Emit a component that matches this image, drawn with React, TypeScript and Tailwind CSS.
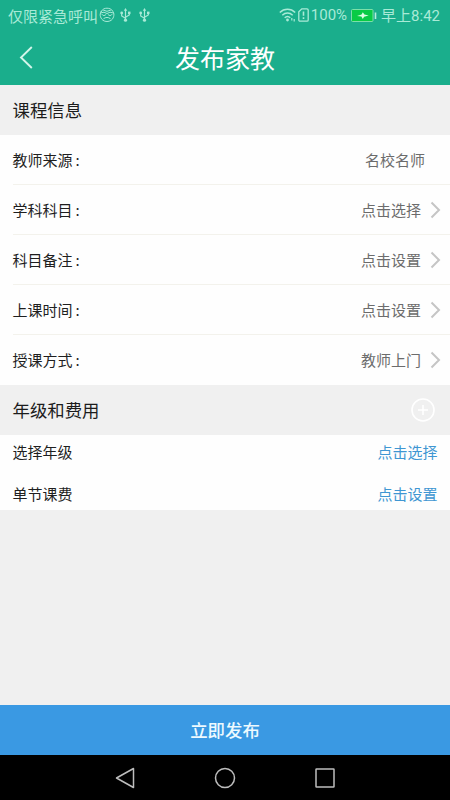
import { ReactNode } from "react"

interface rowProps {
    label: string;
    value: string;
    arrow?: boolean;
    last?: boolean;
}

const rows: rowProps[] = [
    { label: "教师来源", value: "名校名师" },
    { label: "学科科目", value: "点击选择", arrow: true },
    { label: "科目备注", value: "点击设置", arrow: true },
    { label: "上课时间", value: "点击设置", arrow: true },
    { label: "授课方式", value: "教师上门", arrow: true, last: true },
]

const fees = [
    { label: "选择年级", value: "点击选择" },
    { label: "单节课费", value: "点击设置" },
]

const UsbIcon = () => (
    <svg width="11" height="14" viewBox="0 0 11 14" fill="none" stroke="currentColor" strokeWidth="1.2">
        <path d="M5.5 2v10M5.5 10.3L1.7 8V5.2M5.5 9.3L9.3 7V4.7" />
        <path d="M5.5 0L7.2 2.8H3.8z" fill="currentColor" stroke="none" />
        <circle cx="5.5" cy="12.2" r="1.6" fill="currentColor" stroke="none" />
        <circle cx="1.7" cy="4.9" r="1.4" fill="currentColor" stroke="none" />
        <path d="M8 3.6h2.5v2.5H8z" fill="currentColor" stroke="none" />
    </svg>
)

const FaceIcon = () => (
    <svg width="16" height="16" viewBox="0 0 16 16" fill="none" stroke="currentColor" strokeWidth="1" strokeLinecap="round">
        <path d="M2.2 4.5C3.5 2 5.7 1.2 8 1.2s4.8.9 5.9 3.3c1.200 1.800 1.200 3.200.7 5.300C13.700 13 11 14.500 8 14.500S2.500 13 1.500 9.800C.8 7.700 1.200 6.200 2.200 4.500z" />
        <path d="M1.500 6l3.500-.8L8 6.500l3-1.300 3.500.8M3 7.500c.8 1.500 3 1.500 4 0M9 7.500c1 1.500 3.200 1.500 4 0M4.800 11.500c1.900-1.500 4.500-1.500 6.400 0M4.500 3.200L8 4.300l3.500-1.100" />
    </svg>
)

const WifiIcon = () => (
    <svg width="17" height="14" viewBox="0 0 17 14" fill="none" stroke="currentColor" strokeWidth="1.500">
        <path d="M.8 4.500C5.200.2 11.800.2 16.200 4.500M3.300 7.200c3-2.900 7.400-2.900 10.400 0M5.700 9.800c1.700-1.600 3.900-1.600 5.600 0" />
        <circle cx="8.500" cy="12" r="1.400" fill="currentColor" stroke="none" />
        <path d="M12.800 10v2.500M15.200 11v2.500" strokeWidth="1.200" />
    </svg>
)

const SimIcon = () => (
    <svg width="11" height="14" viewBox="0 0 11 14" fill="none" stroke="currentColor" strokeWidth="1.300">
        <path d="M3.800.8H9c.7 0 1.200.4 1.200 1.100V12c0 .7-.5 1.200-1.200 1.200H2c-.7 0-1.200-.5-1.200-1.200V3.800z" />
        <path d="M5.500 3.500v4.300M5.500 9.300V11" strokeWidth="1.600" />
    </svg>
)

const BatteryIcon = () => (
    <svg width="26" height="13" viewBox="0 0 26 13" fill="none">
        <rect x=".5" y=".5" width="21.500" height="12" rx="1" fill="#08cb45" stroke="#7be0a9" />
        <path d="M6 6.900l4.600-1.500 1.200-2.200 1.600 2.400 4.300.8-4.600 1.400-1.300 2.200-1.400-2.500z" fill="#d9ffe3" />
        <path d="M24.500 3.500v6.500" stroke="#b5eedd" strokeWidth="1.600" />
    </svg>
)

const SectionTitle = ({ title, children }: { title: string; children?: ReactNode }) => (
    <div className="flex h-[50px] items-center justify-between bg-[#f0f0f0] pr-[15px] pl-[12.500px] text-[17.400px] text-[#1c1c1c]">
        <span>{title}</span>
        {children}
    </div>
)

const Row = ({ label, value, arrow, last }: rowProps) => (
    <div className="pl-[12.500px]">
        <div className={`flex h-[50px] items-center justify-between border-b ${last ? "border-transparent" : "border-[#f3f2ec]"}`}>
            <div className="text-[#1f1f1f]">
                {label}<span className="ml-[3px]">:</span>
            </div>
            {arrow ? (
                <div className="flex items-center gap-[9px] pr-[9px] text-[#6c6c6c]">
                    <span>{value}</span>
                    <svg width="11" height="18" viewBox="0 0 11 18" fill="none" stroke="#c5c5c5" strokeWidth="2">
                        <path d="M1.500 1.500L9 9l-7.500 7.500" />
                    </svg>
                </div>
            ) : (
                <span className="pr-[25px] text-[#6c6c6c]">{value}</span>
            )}
        </div>
    </div>
)

const App = () => {
    return (
        <div className="flex h-[800px] w-[450px] flex-col overflow-hidden bg-[#f0f0f0] font-['Noto_Sans_CJK_SC',sans-serif] text-[15px] leading-none">
            <header className="h-[85px] bg-[#1aae8c]">
                <div className="flex h-[30px] items-center justify-between pr-[10px] pl-[8px] text-[#a9ead7]">
                    <div className="flex items-center">
                        <span>仅限紧急呼叫</span>
                        <span className="ml-[1px]"><FaceIcon /></span>
                        <span className="ml-[5px]"><UsbIcon /></span>
                        <span className="ml-[8px]"><UsbIcon /></span>
                    </div>
                    <div className="flex items-center">
                        <WifiIcon />
                        <span className="ml-[2px]"><SimIcon /></span>
                        <span className="ml-[2px] font-['Roboto'] text-[15px]">100%</span>
                        <span className="ml-[4px]"><BatteryIcon /></span>
                        <span className="ml-[4px]">早上<span className="font-['Roboto']">8:42</span></span>
                    </div>
                </div>
                <div className="grid h-[55px] grid-cols-[60px_1fr_60px] items-center text-white">
                    <svg className="ml-[19px]" width="14" height="23" viewBox="0 0 14 23" fill="none" stroke="#d3f5ea" strokeWidth="1.900">
                        <path d="M12.800 1L2 11.500 12.800 22" />
                    </svg>
                    <h1 className="text-center text-[25px] font-normal">发布家教</h1>
                </div>
            </header>

            <SectionTitle title="课程信息" />
            <div className="bg-[#fefefe]">
                {rows.map((row) => (
                    <Row key={row.label} {...row} />
                ))}
            </div>

            <SectionTitle title="年级和费用">
                <svg width="24" height="24" viewBox="0 0 24 24" fill="none" stroke="#fff" strokeWidth="1.600">
                    <circle cx="12" cy="12" r="11" />
                    <path d="M12 7v10M7 12h10" />
                </svg>
            </SectionTitle>
            <div className="h-[75px] bg-[#fefefe] pt-[8px]">
                {fees.map((fee) => (
                    <div key={fee.label} className="mb-[26px] flex h-4 items-center justify-between px-[12.500px]">
                        <span className="text-[#1f1f1f]">{fee.label}</span>
                        <span className="text-[#3f96d2]">{fee.value}</span>
                    </div>
                ))}
            </div>

            <button className="mt-auto h-[50px] bg-[#3a99e3] text-[17.400px] font-medium text-[#eefaff]">立即发布</button>
            <nav className="flex h-[45px] items-center justify-center gap-[76px] bg-black">
                <svg width="24" height="24" viewBox="0 0 24 24" fill="none" stroke="#bdbdbd" strokeWidth="1.500" strokeLinejoin="round">
                    <path d="M20.500 2.500v19L3.500 12z" />
                </svg>
                <svg width="24" height="24" viewBox="0 0 24 24" fill="none" stroke="#bdbdbd" strokeWidth="1.500">
                    <circle cx="12" cy="12" r="9.500" />
                </svg>
                <svg width="24" height="24" viewBox="0 0 24 24" fill="none" stroke="#bdbdbd" strokeWidth="1.500">
                    <rect x="3" y="3" width="18" height="18" rx=".5" />
                </svg>
            </nav>
        </div>
    )
}

export default App
